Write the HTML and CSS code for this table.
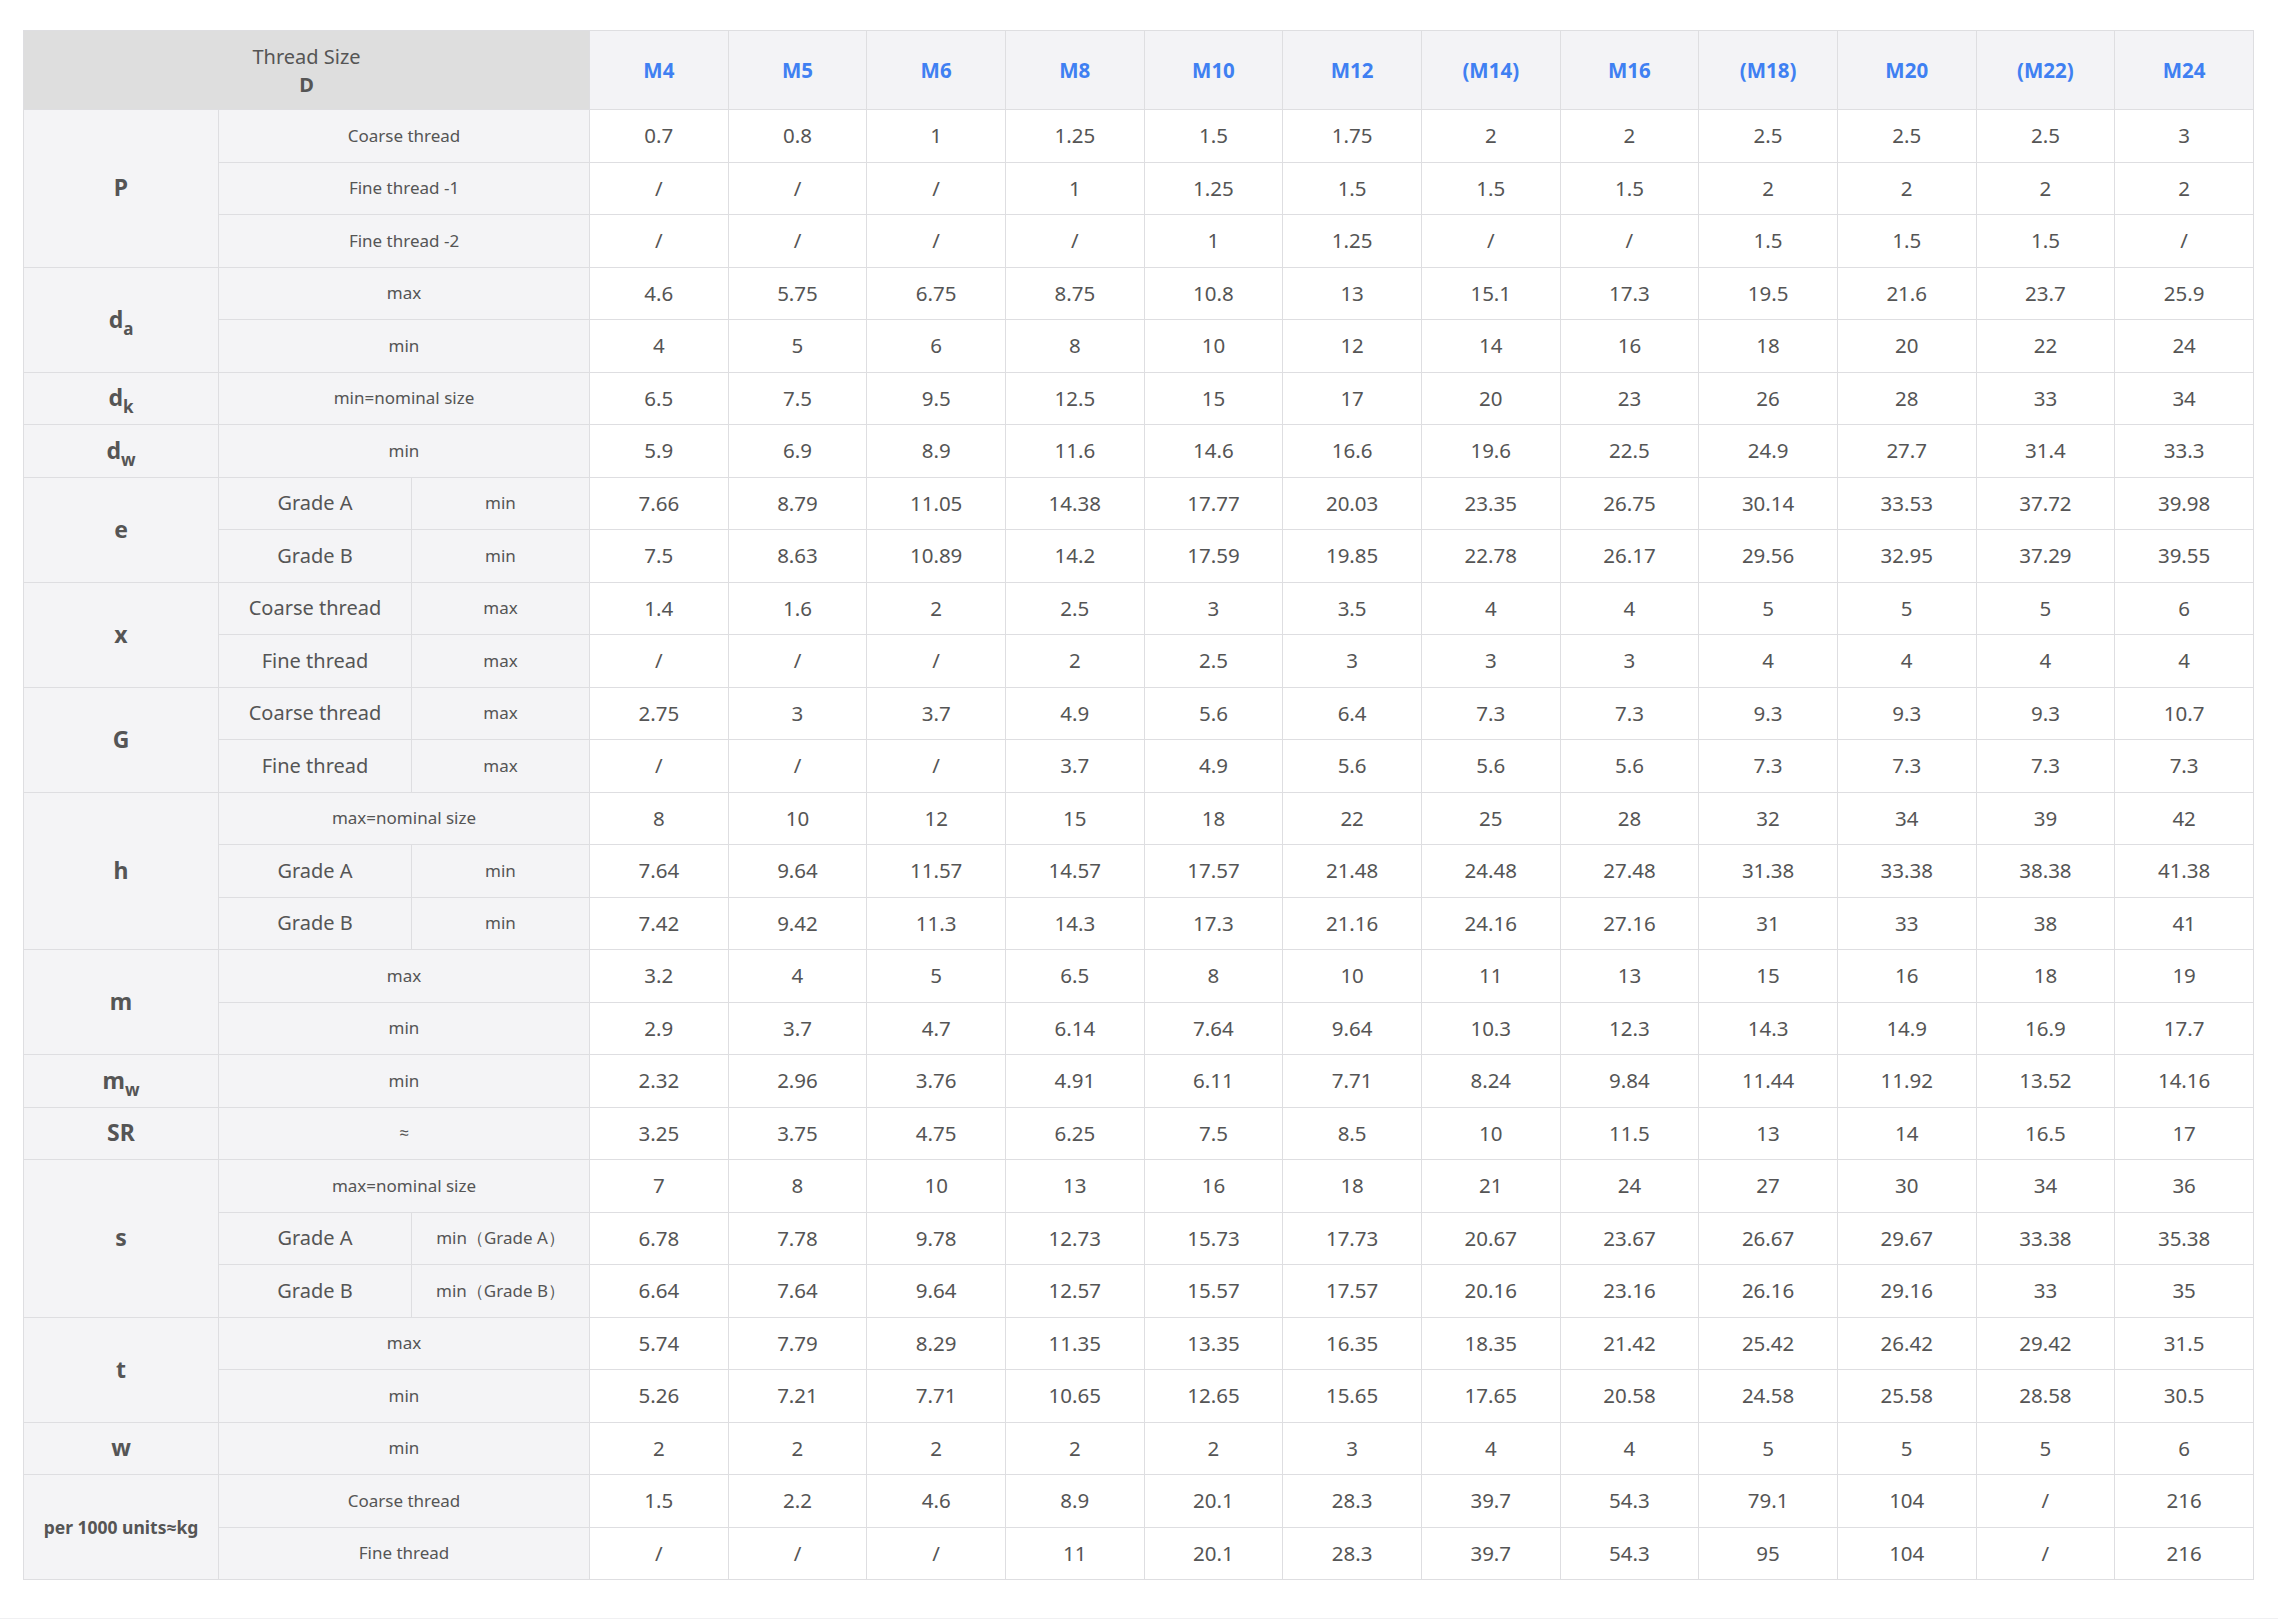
FILE: index.html
```html
<!DOCTYPE html>
<html lang="en">
<head>
<meta charset="utf-8">
<title>Thread Size Table</title>
<link rel="stylesheet" href="styles.css">
</head>
<body>
<div class="page">
<table class="spec">
<colgroup>
<col class="c1"><col class="c2"><col class="c3">
<col><col><col><col><col><col><col><col><col><col><col><col>
</colgroup>
<thead>
<tr class="head">
<th colspan="3" class="corner"><span class="ts">Thread Size</span><span class="tsd">D</span></th>
<th>M4</th><th>M5</th><th>M6</th><th>M8</th><th>M10</th><th>M12</th><th>(M14)</th><th>M16</th><th>(M18)</th><th>M20</th><th>(M22)</th><th>M24</th>
</tr>
</thead>
<tbody>
<tr><td rowspan="3" class="sym">P</td><td colspan="2" class="sm">Coarse thread</td><td>0.7</td><td>0.8</td><td>1</td><td>1.25</td><td>1.5</td><td>1.75</td><td>2</td><td>2</td><td>2.5</td><td>2.5</td><td>2.5</td><td>3</td></tr>
<tr><td colspan="2" class="sm">Fine thread -1</td><td>/</td><td>/</td><td>/</td><td>1</td><td>1.25</td><td>1.5</td><td>1.5</td><td>1.5</td><td>2</td><td>2</td><td>2</td><td>2</td></tr>
<tr><td colspan="2" class="sm">Fine thread -2</td><td>/</td><td>/</td><td>/</td><td>/</td><td>1</td><td>1.25</td><td>/</td><td>/</td><td>1.5</td><td>1.5</td><td>1.5</td><td>/</td></tr>

<tr><td rowspan="2" class="sym">d<sub>a</sub></td><td colspan="2" class="sm">max</td><td>4.6</td><td>5.75</td><td>6.75</td><td>8.75</td><td>10.8</td><td>13</td><td>15.1</td><td>17.3</td><td>19.5</td><td>21.6</td><td>23.7</td><td>25.9</td></tr>
<tr><td colspan="2" class="sm">min</td><td>4</td><td>5</td><td>6</td><td>8</td><td>10</td><td>12</td><td>14</td><td>16</td><td>18</td><td>20</td><td>22</td><td>24</td></tr>

<tr><td class="sym">d<sub>k</sub></td><td colspan="2" class="sm">min=nominal size</td><td>6.5</td><td>7.5</td><td>9.5</td><td>12.5</td><td>15</td><td>17</td><td>20</td><td>23</td><td>26</td><td>28</td><td>33</td><td>34</td></tr>

<tr><td class="sym">d<sub>w</sub></td><td colspan="2" class="sm">min</td><td>5.9</td><td>6.9</td><td>8.9</td><td>11.6</td><td>14.6</td><td>16.6</td><td>19.6</td><td>22.5</td><td>24.9</td><td>27.7</td><td>31.4</td><td>33.3</td></tr>

<tr><td rowspan="2" class="sym">e</td><td class="lg">Grade A</td><td class="sm">min</td><td>7.66</td><td>8.79</td><td>11.05</td><td>14.38</td><td>17.77</td><td>20.03</td><td>23.35</td><td>26.75</td><td>30.14</td><td>33.53</td><td>37.72</td><td>39.98</td></tr>
<tr><td class="lg">Grade B</td><td class="sm">min</td><td>7.5</td><td>8.63</td><td>10.89</td><td>14.2</td><td>17.59</td><td>19.85</td><td>22.78</td><td>26.17</td><td>29.56</td><td>32.95</td><td>37.29</td><td>39.55</td></tr>

<tr><td rowspan="2" class="sym">x</td><td class="lg">Coarse thread</td><td class="sm">max</td><td>1.4</td><td>1.6</td><td>2</td><td>2.5</td><td>3</td><td>3.5</td><td>4</td><td>4</td><td>5</td><td>5</td><td>5</td><td>6</td></tr>
<tr><td class="lg">Fine thread</td><td class="sm">max</td><td>/</td><td>/</td><td>/</td><td>2</td><td>2.5</td><td>3</td><td>3</td><td>3</td><td>4</td><td>4</td><td>4</td><td>4</td></tr>

<tr><td rowspan="2" class="sym">G</td><td class="lg">Coarse thread</td><td class="sm">max</td><td>2.75</td><td>3</td><td>3.7</td><td>4.9</td><td>5.6</td><td>6.4</td><td>7.3</td><td>7.3</td><td>9.3</td><td>9.3</td><td>9.3</td><td>10.7</td></tr>
<tr><td class="lg">Fine thread</td><td class="sm">max</td><td>/</td><td>/</td><td>/</td><td>3.7</td><td>4.9</td><td>5.6</td><td>5.6</td><td>5.6</td><td>7.3</td><td>7.3</td><td>7.3</td><td>7.3</td></tr>

<tr><td rowspan="3" class="sym">h</td><td colspan="2" class="sm">max=nominal size</td><td>8</td><td>10</td><td>12</td><td>15</td><td>18</td><td>22</td><td>25</td><td>28</td><td>32</td><td>34</td><td>39</td><td>42</td></tr>
<tr><td class="lg">Grade A</td><td class="sm">min</td><td>7.64</td><td>9.64</td><td>11.57</td><td>14.57</td><td>17.57</td><td>21.48</td><td>24.48</td><td>27.48</td><td>31.38</td><td>33.38</td><td>38.38</td><td>41.38</td></tr>
<tr><td class="lg">Grade B</td><td class="sm">min</td><td>7.42</td><td>9.42</td><td>11.3</td><td>14.3</td><td>17.3</td><td>21.16</td><td>24.16</td><td>27.16</td><td>31</td><td>33</td><td>38</td><td>41</td></tr>

<tr><td rowspan="2" class="sym">m</td><td colspan="2" class="sm">max</td><td>3.2</td><td>4</td><td>5</td><td>6.5</td><td>8</td><td>10</td><td>11</td><td>13</td><td>15</td><td>16</td><td>18</td><td>19</td></tr>
<tr><td colspan="2" class="sm">min</td><td>2.9</td><td>3.7</td><td>4.7</td><td>6.14</td><td>7.64</td><td>9.64</td><td>10.3</td><td>12.3</td><td>14.3</td><td>14.9</td><td>16.9</td><td>17.7</td></tr>

<tr><td class="sym">m<sub>w</sub></td><td colspan="2" class="sm">min</td><td>2.32</td><td>2.96</td><td>3.76</td><td>4.91</td><td>6.11</td><td>7.71</td><td>8.24</td><td>9.84</td><td>11.44</td><td>11.92</td><td>13.52</td><td>14.16</td></tr>

<tr><td class="sym">SR</td><td colspan="2" class="sm">≈</td><td>3.25</td><td>3.75</td><td>4.75</td><td>6.25</td><td>7.5</td><td>8.5</td><td>10</td><td>11.5</td><td>13</td><td>14</td><td>16.5</td><td>17</td></tr>

<tr><td rowspan="3" class="sym">s</td><td colspan="2" class="sm">max=nominal size</td><td>7</td><td>8</td><td>10</td><td>13</td><td>16</td><td>18</td><td>21</td><td>24</td><td>27</td><td>30</td><td>34</td><td>36</td></tr>
<tr><td class="lg">Grade A</td><td class="sm">min（Grade A）</td><td>6.78</td><td>7.78</td><td>9.78</td><td>12.73</td><td>15.73</td><td>17.73</td><td>20.67</td><td>23.67</td><td>26.67</td><td>29.67</td><td>33.38</td><td>35.38</td></tr>
<tr><td class="lg">Grade B</td><td class="sm">min（Grade B）</td><td>6.64</td><td>7.64</td><td>9.64</td><td>12.57</td><td>15.57</td><td>17.57</td><td>20.16</td><td>23.16</td><td>26.16</td><td>29.16</td><td>33</td><td>35</td></tr>

<tr><td rowspan="2" class="sym">t</td><td colspan="2" class="sm">max</td><td>5.74</td><td>7.79</td><td>8.29</td><td>11.35</td><td>13.35</td><td>16.35</td><td>18.35</td><td>21.42</td><td>25.42</td><td>26.42</td><td>29.42</td><td>31.5</td></tr>
<tr><td colspan="2" class="sm">min</td><td>5.26</td><td>7.21</td><td>7.71</td><td>10.65</td><td>12.65</td><td>15.65</td><td>17.65</td><td>20.58</td><td>24.58</td><td>25.58</td><td>28.58</td><td>30.5</td></tr>

<tr><td class="sym">w</td><td colspan="2" class="sm">min</td><td>2</td><td>2</td><td>2</td><td>2</td><td>2</td><td>3</td><td>4</td><td>4</td><td>5</td><td>5</td><td>5</td><td>6</td></tr>

<tr><td rowspan="2" class="sym symsm">per 1000 units≈kg</td><td colspan="2" class="sm">Coarse thread</td><td>1.5</td><td>2.2</td><td>4.6</td><td>8.9</td><td>20.1</td><td>28.3</td><td>39.7</td><td>54.3</td><td>79.1</td><td>104</td><td>/</td><td>216</td></tr>
<tr><td colspan="2" class="sm">Fine thread</td><td>/</td><td>/</td><td>/</td><td>11</td><td>20.1</td><td>28.3</td><td>39.7</td><td>54.3</td><td>95</td><td>104</td><td>/</td><td>216</td></tr>
</tbody>
</table>
</div>
</body>
</html>
```

FILE: styles.css
```css
html, body {
  margin: 0;
  padding: 0;
  background: #ffffff;
}

.page {
  box-sizing: border-box;
  height: 1619px;
  padding: 30px 0 0 23px;
  border-bottom: 1px solid #f0f0f2;
  font-family: "Noto Sans", "Open Sans", sans-serif;
  color: #555555;
}

.spec {
  width: 2231px;
  table-layout: fixed;
  border-collapse: collapse;
}

.c1 { width: 195px; }
.c2 { width: 193px; }
.c3 { width: 178px; }

.spec th,
.spec td {
  border: 1px solid #dedee1;
  padding: 0;
  text-align: center;
  vertical-align: middle;
  line-height: 1.2;
}

.head th {
  height: 78px;
  background: #f3f3f6;
  color: #3f80f2;
  font-size: 20.5px;
  font-weight: 700;
}

.head th.corner {
  background: #dedede;
  color: #555555;
}

.ts {
  display: block;
  font-size: 20px;
  font-weight: 400;
  line-height: 30px;
}

.tsd {
  display: block;
  font-size: 20px;
  font-weight: 700;
  line-height: 26px;
}

.spec tbody td {
  height: 51.5px;
  font-size: 20.5px;
  background: #ffffff;
}

.spec tbody td.sym,
.spec tbody td.sm,
.spec tbody td.lg {
  background: #f4f4f6;
}

.spec tbody td.sym {
  font-size: 23px;
  font-weight: 700;
}

.spec tbody td.symsm {
  font-size: 17.5px;
}

.sym sub {
  font-size: 17px;
  vertical-align: -7px;
  line-height: 0;
}

.spec tbody td.sm {
  font-size: 17px;
}

.spec tbody td.lg {
  font-size: 20px;
}
```
